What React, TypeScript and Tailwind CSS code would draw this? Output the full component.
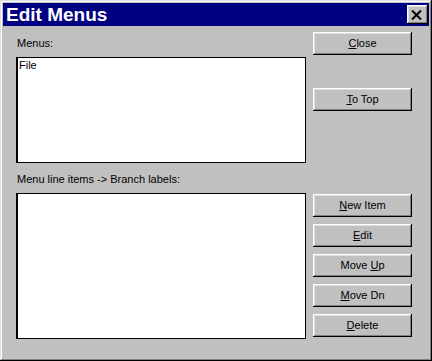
const raised =
  'bg-[#c0c0c0] shadow-[inset_-1px_-1px_#000,inset_1px_1px_#fff,inset_-2px_-2px_#808080,inset_2px_2px_#dfdfdf]';

function Btn({ pre, mn, post }: { pre?: string; mn: string; post?: string }) {
  return (
    <button className={`${raised} h-[23px] w-[99px] text-[11px] leading-[13px] text-black flex items-center justify-center`}>
      <span>
        {pre}
        <span className="underline underline-offset-1">{mn}</span>
        {post}
      </span>
    </button>
  );
}

export default function App() {
  return (
    <div className="w-[432px] h-[361px] bg-[#c0c0c0] p-[3px] flex flex-col font-['Liberation_Sans',Arial,sans-serif] shadow-[inset_-1px_-1px_#000,inset_1px_1px_#dfdfdf,inset_-2px_-2px_#808080,inset_2px_2px_#fff]">
      {/* title bar */}
      <div className="h-[23px] bg-[#000080] flex items-center justify-between pl-[3px] pr-[1px]">
        <span className="text-white font-bold text-[19px] leading-none">Edit Menus</span>
        <div className={`${raised} w-[21px] h-[19px] flex items-center justify-center pr-[2px]`}>
          <svg width="11" height="10" viewBox="0 0 11 10">
            <path d="M1 0.5 L10 9.5 M10 0.5 L1 9.5" stroke="#000" strokeWidth="2" fill="none" />
          </svg>
        </div>
      </div>

      <div className="flex-1 flex pl-[13px]">
        <div className="w-[290px] flex flex-col pt-[11px]">
          <div className="text-[11px] leading-[13px] text-black pl-[1px]">Menus:</div>
          <div className="mt-[7px] h-[106px] bg-white border border-black border-l-2 text-[11px] leading-[13px] text-black pl-[1px] pt-[1px]">
            File
          </div>
          <div className="mt-[10px] text-[11px] leading-[13px] text-black pl-[1px]">Menu line items -&gt; Branch labels:</div>
          <div className="mt-[7px] h-[146px] bg-white border border-black border-l-2" />
        </div>

        <div className="ml-[7px] flex flex-col pt-[6px]">
          <Btn mn="C" post="lose" />
          <div className="mt-[33px]">
            <Btn mn="T" post="o Top" />
          </div>
          <div className="mt-[83px] flex flex-col gap-[7px]">
            <Btn mn="N" post="ew Item" />
            <Btn mn="E" post="dit" />
            <Btn pre="Move " mn="U" post="p" />
            <Btn mn="M" post="ove Dn" />
            <Btn mn="D" post="elete" />
          </div>
        </div>
      </div>
    </div>
  );
}
